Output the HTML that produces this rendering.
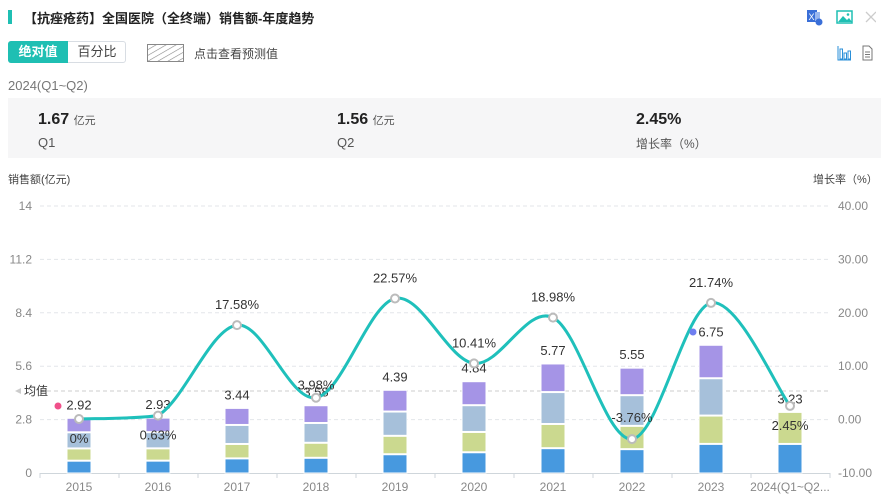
<!DOCTYPE html>
<html><head><meta charset="utf-8"><style>
body{margin:0;width:881px;height:498px;overflow:hidden;background:#fff;font-family:"Liberation Sans","Noto Sans CJK SC",sans-serif;color:#333;position:relative}
.a{position:absolute;white-space:nowrap}
</style></head><body>
<div class="a" style="left:8px;top:10px;width:4px;height:14px;background:#1fbfb3"></div>
<div class="a" style="left:24px;top:8px;font-size:13px;font-weight:bold;color:#222">【抗痤疮药】全国医院（全终端）销售额-年度趋势</div>
<div class="a" style="left:8px;top:41px;width:118px;height:22px;border:1px solid #d8dde3;border-radius:3px;box-sizing:border-box"></div>
<div class="a" style="left:8px;top:41px;width:60px;height:22px;background:#1fbfb3;border-radius:3px 0 0 3px;color:#fff;font-size:13px;font-weight:bold;line-height:22px;text-align:center">绝对值</div>
<div class="a" style="left:68px;top:41px;width:58px;line-height:22px;font-size:13px;text-align:center;color:#444">百分比</div>
<svg class="a" style="left:147px;top:44px" width="37" height="18"><defs><pattern id="h" width="5" height="5" patternUnits="userSpaceOnUse" patternTransform="rotate(-30)"><line x1="0" y1="0" x2="5" y2="0" stroke="#888" stroke-width="1.2"/></pattern></defs><rect x="0.5" y="0.5" width="36" height="17" fill="url(#h)" stroke="#888"/></svg>
<div class="a" style="left:194px;top:45px;font-size:12px;color:#444">点击查看预测值</div>
<div class="a" style="left:8px;top:78px;font-size:13px;color:#777">2024(Q1~Q2)</div>
<svg class="a" style="left:806px;top:8px" width="70" height="18"><rect x="1" y="2" width="10" height="12" fill="#3a6fd8"/><text x="2.5" y="12" font-size="9" fill="#fff" font-family="Liberation Sans">X</text><rect x="9" y="4" width="5" height="9" fill="#9ab7ef"/><circle cx="13" cy="14" r="3.5" fill="#3a6fd8"/><rect x="31" y="3" width="15" height="12" fill="#fff" stroke="#1fbfb3" stroke-width="1.5"/><path d="M32 14 L37 8 L41 12 L43 10 L46 14Z" fill="#1fbfb3"/><circle cx="42" cy="6.5" r="1.3" fill="#1fbfb3"/><path d="M60 4 L70 14 M70 4 L60 14" stroke="#ccc" stroke-width="1.3"/></svg>
<svg class="a" style="left:836px;top:45px" width="40" height="16"><path d="M2 1v14h13" fill="none" stroke="#2a8fd8"/><rect x="4" y="4" width="2.5" height="10" fill="none" stroke="#2a8fd8"/><rect x="8" y="8" width="2.5" height="6" fill="none" stroke="#2a8fd8"/><rect x="12" y="6" width="2.5" height="8" fill="none" stroke="#2a8fd8"/><path d="M27 1h6l3 3v11h-9z" fill="none" stroke="#777"/><path d="M29 7h5M29 9.5h5M29 12h5" stroke="#777"/></svg>
<div class="a" style="left:8px;top:98px;width:873px;height:60px;background:#f6f6f7"></div>
<div class="a" style="left:38px;top:111px;font-size:16px;font-weight:bold;color:#222">1.67 <span style="font-size:11px;font-weight:normal;color:#555">亿元</span></div>
<div class="a" style="left:38px;top:135px;font-size:13px;color:#555">Q1</div>
<div class="a" style="left:337px;top:111px;font-size:16px;font-weight:bold;color:#222">1.56 <span style="font-size:11px;font-weight:normal;color:#555">亿元</span></div>
<div class="a" style="left:337px;top:135px;font-size:13px;color:#555">Q2</div>
<div class="a" style="left:636px;top:111px;font-size:16px;font-weight:bold;color:#222">2.45%</div>
<div class="a" style="left:636px;top:135px;font-size:12px;color:#555">增长率（%）</div>
<div class="a" style="left:8px;top:171px;font-size:11px;color:#444">销售额(亿元)</div>
<div class="a" style="left:813px;top:171px;font-size:11px;color:#444">增长率（%）</div>
<svg id="c" class="a" style="left:0;top:0" width="881" height="498" font-family="Liberation Sans"></svg>
<script>
var s='',k=19.07,yr=['2015','2016','2017','2018','2019','2020','2021','2022','2023','2024(Q1~Q2...'];
var T=[2.92,2.93,3.44,3.58,4.39,4.84,5.77,5.55,6.75,3.23];
var R=['0%','0.63%','17.58%','3.98%','22.57%','10.41%','18.98%','-3.76%','21.74%','2.45%'];
var r=[0,.63,17.58,3.98,22.57,10.41,18.98,-3.76,21.74,2.45];
var L=['0','2.8','5.6','8.4','11.2','14'],RL=['-10.00','0.00','10.00','20.00','30.00','40.00'];
for(var i=0;i<6;i++){var y=473-i*53.4;if(i>0)s+='<line x1="40" x2="830" y1="'+y+'" y2="'+y+'" stroke="#e3e6ea" stroke-dasharray="4,3"/>';
s+='<text x="32" y="'+(y+4)+'" font-size="12" fill="#888" text-anchor="end">'+L[i]+'</text><text x="838" y="'+(y+4)+'" font-size="12" fill="#888">'+RL[i]+'</text>';}
s+='<line x1="40" x2="830" y1="391" y2="391" stroke="#ccc" stroke-dasharray="4,3"/><path d="M15 391l6-3v6z" fill="#ccc"/><text x="24" y="395" font-size="12" fill="#333">均值</text>';
s+='<line x1="40" x2="830" y1="473.5" y2="473.5" stroke="#cfd6db"/>';
for(i=0;i<=10;i++){var x=40+i*79;s+='<line x1="'+x+'" x2="'+x+'" y1="473" y2="478" stroke="#cfd6db"/>';}
var C=['#4799df','#cbd98f','#a6c0da','#a594e6'],F=[.23,.22,.29,.26];
for(i=0;i<10;i++){var c=79+i*79,b=473,f=F;if(i==9)f=[.48,.52];
for(var j=0;j<f.length;j++){var h=T[i]*f[j]*k;s+='<rect x="'+(c-12)+'" y="'+(b-h+1)+'" width="24" height="'+(h-1)+'" fill="'+C[j]+'" stroke="#fff" stroke-width="1"/>';b-=h;}
s+='<text x="'+c+'" y="'+(b-8)+'" font-size="13" fill="#333" text-anchor="middle">'+T[i]+'</text>';
s+='<text x="'+c+'" y="491" font-size="12" fill="#888" text-anchor="middle">'+yr[i]+'</text>';}
s+='<path d="M79 419C92.2 418.4 131.7 419 158 415.6C184.3 400 210.7 328.1 237 325.1C263.3 322.1 289.7 402.1 316 397.7C342.3 393.3 368.7 304.2 395 298.5C421.3 292.8 447.7 360.2 474 363.4C500.3 366.6 526.7 305 553 317.6C579.3 330.2 605.7 441.6 632 439.1C658.3 436.7 684.7 308.4 711 302.9C737.3 297.4 776.8 388.7 790 405.9" fill="none" stroke="#1fc0bb" stroke-width="3"/>';
for(i=0;i<10;i++){var c=79+i*79,y=419-r[i]*5.34;s+='<circle cx="'+c+'" cy="'+y+'" r="4" fill="#fff" stroke="#bbb" stroke-width="2"/>';
var ty=(i==0||i==1||i==9)?y+24:y-16;if(i==3)ty=y-8;if(i==7)ty=y-17;
s+='<text x="'+c+'" y="'+ty+'" font-size="13" fill="#333" text-anchor="middle">'+R[i]+'</text>';}
s+='<circle cx="58" cy="406" r="3.5" fill="#f0508a"/><circle cx="693" cy="332" r="3.5" fill="#6f7ef0"/>';
document.getElementById('c').innerHTML=s;
</script>
</body></html>
